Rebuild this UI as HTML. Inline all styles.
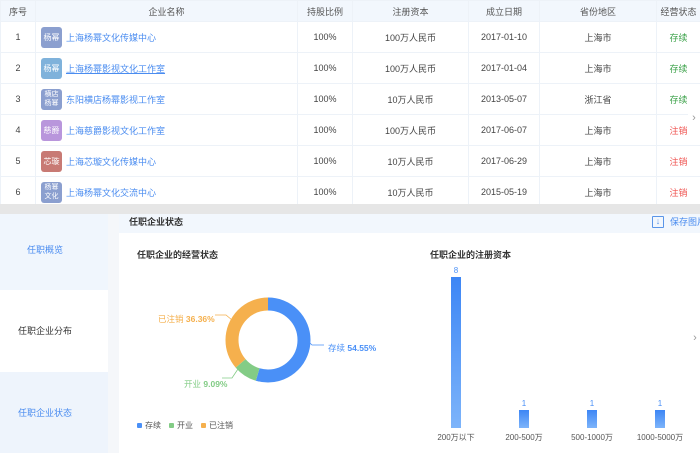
<!DOCTYPE html>
<html><head><meta charset="utf-8"><style>
*{margin:0;padding:0;box-sizing:border-box}
body{width:700px;height:453px;overflow:hidden;background:#fff;font-family:"Liberation Sans","Noto Sans CJK SC",sans-serif;font-size:9px;color:#333;position:relative}
table{border-collapse:collapse;position:absolute;left:0;top:0;width:700px;table-layout:fixed}
td,th{border:1px solid #edf2f8;text-align:center;font-weight:normal;height:31px;color:#444;white-space:nowrap;overflow:hidden}
th{height:21px;background:#f2f7fd;color:#555}
.nm{text-align:left;padding-left:5px}
.lg{display:inline-block;width:21px;height:21px;border-radius:3px;color:#fff;font-size:8px;line-height:21px;text-align:center;vertical-align:middle;margin-right:4px}
.lg.s{font-size:7px;line-height:9px;padding-top:1px}
a{color:#4a8cf0;text-decoration:none;vertical-align:middle}
.g{color:#3ca24a}.r{color:#ef5350}
</style></head><body>
<table>
<colgroup><col style="width:35px"><col style="width:262px"><col style="width:55px"><col style="width:116px"><col style="width:71px"><col style="width:117px"><col style="width:44px"></colgroup>
<tr><th>序号</th><th>企业名称</th><th>持股比例</th><th>注册资本</th><th>成立日期</th><th>省份地区</th><th>经营状态</th></tr>
<tr><td>1</td><td class="nm"><span class="lg" style="background:#8b9fcf">杨幂</span><a>上海杨幂文化传媒中心</a></td><td>100%</td><td>100万人民币</td><td>2017-01-10</td><td>上海市</td><td class="g">存续</td></tr>
<tr><td>2</td><td class="nm"><span class="lg" style="background:#7fb2db">杨幂</span><a style="text-decoration:underline">上海杨幂影视文化工作室</a></td><td>100%</td><td>100万人民币</td><td>2017-01-04</td><td>上海市</td><td class="g">存续</td></tr>
<tr><td>3</td><td class="nm"><span class="lg s" style="background:#8b9fcf">横店<br>杨幂</span><a>东阳横店杨幂影视工作室</a></td><td>100%</td><td>10万人民币</td><td>2013-05-07</td><td>浙江省</td><td class="g">存续</td></tr>
<tr><td>4</td><td class="nm"><span class="lg" style="background:#b996dc">慈爵</span><a>上海慈爵影视文化工作室</a></td><td>100%</td><td>100万人民币</td><td>2017-06-07</td><td>上海市</td><td class="r">注销</td></tr>
<tr><td>5</td><td class="nm"><span class="lg" style="background:#c87a74">芯璇</span><a>上海芯璇文化传媒中心</a></td><td>100%</td><td>10万人民币</td><td>2017-06-29</td><td>上海市</td><td class="r">注销</td></tr>
<tr><td>6</td><td class="nm"><span class="lg s" style="background:#8b9fcf">杨幂<br>文化</span><a>上海杨幂文化交流中心</a></td><td>100%</td><td>10万人民币</td><td>2015-05-19</td><td>上海市</td><td class="r">注销</td></tr>
</table>
<div style="position:absolute;left:688px;top:104px;width:12px;height:28px;background:#fff;color:#999;font-size:11px;line-height:28px;text-align:center">›</div>
<div style="position:absolute;left:0;top:204px;width:700px;height:10px;background:#e6e6e6"></div>
<div style="position:absolute;left:0;top:214px;width:108px;height:239px;background:#eef4fc"></div>
<div style="position:absolute;left:0;top:214px;width:108px;height:76px;background:#f0f6fd;color:#4a8cf0;font-size:9px;line-height:72px;padding-left:27px">任职概览</div>
<div style="position:absolute;left:0;top:290px;width:108px;height:82px;background:#fff;line-height:82px;padding-left:18px;font-size:9px;color:#333">任职企业分布</div>
<div style="position:absolute;left:0;top:372px;width:108px;height:81px;background:#eef4fc;line-height:82px;padding-left:18px;color:#4a8cf0">任职企业状态</div>
<div style="position:absolute;left:108px;top:214px;width:11px;height:239px;background:#f5f7fa"></div>
<div style="position:absolute;left:119px;top:214px;width:581px;height:19px;background:#f2f7fd;padding-left:10px;line-height:16px;font-weight:bold;color:#333;white-space:nowrap;overflow:hidden">任职企业状态
<span style="position:absolute;left:533px;top:2px;width:12px;height:12px;border:1px solid #5a95e8;border-radius:1px;color:#5a95e8;font-size:9px;line-height:9px;text-align:center;font-weight:normal">↓</span>
<span style="position:absolute;left:551px;top:0;color:#4a8cf0;font-weight:normal;white-space:nowrap">保存图片</span></div>
<div style="position:absolute;left:137px;top:248px;font-weight:bold;color:#333">任职企业的经营状态</div>
<div style="position:absolute;left:430px;top:248px;font-weight:bold;color:#333">任职企业的注册资本</div>
<svg style="position:absolute;left:119px;top:233px" width="581" height="220">
<g transform="translate(149,107) rotate(-90)">
<circle r="36" fill="none" stroke="#4a90f7" stroke-width="13" stroke-dasharray="123.4 226.2"/>
<circle r="36" fill="none" stroke="#83cc86" stroke-width="13" stroke-dasharray="20.6 226.2" stroke-dashoffset="-123.4"/>
<circle r="36" fill="none" stroke="#f5b04d" stroke-width="13" stroke-dasharray="82.2 226.2" stroke-dashoffset="-144"/>
</g>
<path d="M191 110 L193 112 L205 112" stroke="#4a90f7" fill="none" stroke-width="0.8"/>
<path d="M119 136 L113 145 L103 145" stroke="#83cc86" fill="none" stroke-width="0.8"/>
<path d="M96 82 L107 82 L113 87" stroke="#f5b04d" fill="none" stroke-width="0.8"/>
<text x="209" y="118" fill="#4a90f7" font-size="8.5" font-family="Liberation Sans,Noto Sans CJK SC,sans-serif">存续 <tspan font-weight="bold">54.55%</tspan></text>
<text x="65" y="154" fill="#83cc86" font-size="8.5" font-family="Liberation Sans,Noto Sans CJK SC,sans-serif">开业 <tspan font-weight="bold">9.09%</tspan></text>
<text x="39" y="89" fill="#f5b04d" font-size="8.5" font-family="Liberation Sans,Noto Sans CJK SC,sans-serif">已注销 <tspan font-weight="bold">36.36%</tspan></text>
<g font-size="8" font-family="Liberation Sans,Noto Sans CJK SC,sans-serif" fill="#555">
<rect x="18" y="190" width="5" height="5" rx="1" fill="#4a90f7"/><text x="26" y="195">存续</text>
<rect x="50" y="190" width="5" height="5" rx="1" fill="#83cc86"/><text x="58" y="195">开业</text>
<rect x="82" y="190" width="5" height="5" rx="1" fill="#f5b04d"/><text x="90" y="195">已注销</text>
</g>
<defs><linearGradient id="b" x1="0" y1="0" x2="0" y2="1"><stop offset="0" stop-color="#3d86f5"/><stop offset="1" stop-color="#7db4fa"/></linearGradient></defs>
<g fill="url(#b)"><rect x="332" y="44" width="10" height="151"/><rect x="400" y="177" width="10" height="18"/><rect x="468" y="177" width="10" height="18"/><rect x="536" y="177" width="10" height="18"/></g>
<g font-size="8" font-family="Liberation Sans,Noto Sans CJK SC,sans-serif" fill="#4a90f7" text-anchor="middle"><text x="337" y="40">8</text><text x="405" y="173">1</text><text x="473" y="173">1</text><text x="541" y="173">1</text></g>
<g font-size="8" font-family="Liberation Sans,Noto Sans CJK SC,sans-serif" fill="#555" text-anchor="middle"><text x="337" y="207">200万以下</text><text x="405" y="207">200-500万</text><text x="473" y="207">500-1000万</text><text x="541" y="207">1000-5000万</text></g>
</svg>
<div style="position:absolute;left:690px;top:323px;width:10px;height:30px;background:#fff;color:#999;font-size:11px;line-height:30px;text-align:center">›</div>
</body></html>
